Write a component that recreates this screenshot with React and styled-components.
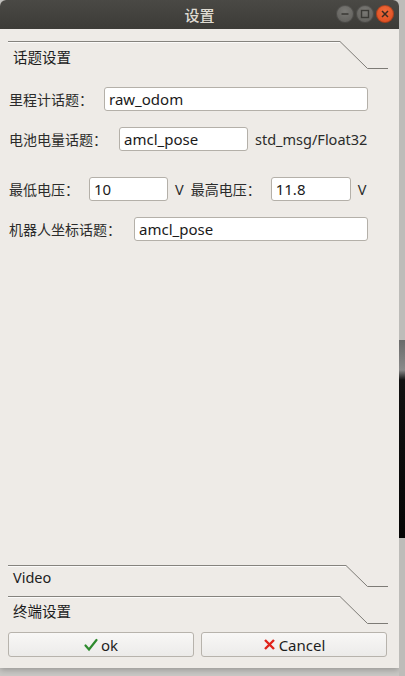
import styled, { createGlobalStyle } from 'styled-components';

const GlobalStyle = createGlobalStyle`
  html, body { margin: 0; padding: 0; }
  body {
    width: 405px;
    height: 676px;
    overflow: hidden;
    background: #c9c8c5;
    font-family: "Noto Sans", "Noto Sans CJK SC", sans-serif;
  }
`;

const Desktop = styled.div`
  display: flex;
  width: 405px;
  height: 676px;
`;

const Window = styled.div`
  width: 399px;
  height: 668px;
  display: flex;
  flex-direction: column;
  background: #eeebe7;
  border-radius: 6px 6px 0 0;
  overflow: hidden;
  box-shadow: 0 2px 6px rgba(0, 0, 0, 0.25);
  flex-shrink: 0;
`;

const Strip = styled.div`
  flex: 1;
  display: flex;
  flex-direction: column;
  background: #bdbcb9;
`;

const StripGap = styled.div`
  height: ${({ $h }) => $h}px;
`;

const StripDark = styled.div`
  height: 198px;
  background: linear-gradient(#6a6a6a 0, #8a8a8a 30px, #111 40px, #050505 100%);
`;

const TitleBar = styled.div`
  height: 29px;
  flex-shrink: 0;
  display: flex;
  align-items: center;
  justify-content: center;
  position: relative;
  background: linear-gradient(#4a4945, #3c3b37);
  color: #dfdbd2;
  font-family: "Noto Sans CJK SC", sans-serif;
  font-size: 15px;
  font-weight: 500;
`;

const WinButtons = styled.div`
  position: absolute;
  right: 5px;
  top: 5px;
  display: flex;
  gap: 2px;
`;

const WinButton = styled.div`
  width: 18px;
  height: 18px;
  border-radius: 50%;
  display: flex;
  align-items: center;
  justify-content: center;
  background: ${({ $close }) =>
    $close ? 'radial-gradient(circle at 50% 35%, #f06a3a, #d9481c)' : 'radial-gradient(circle at 50% 35%, #7a7975, #5b5a56)'};
  box-shadow: inset 0 0 0 1px rgba(0, 0, 0, 0.25);
`;

const Body = styled.div`
  flex: 1;
  display: flex;
  flex-direction: column;
  padding: 12px 11px 11px 8px;
`;

const Header = styled.div`
  display: flex;
  height: ${({ $h }) => $h}px;
  flex-shrink: 0;
`;

const HeaderLabel = styled.div`
  flex: 1;
  border-top: 1px solid #85837e;
  box-shadow: inset 0 1px 0 #fbfaf9;
  padding-left: 5px;
  padding-top: ${({ $pt }) => $pt}px;
  font-size: 14.5px;
  color: #1d1d1d;
  line-height: 18px;
`;

const Form = styled.div`
  display: flex;
  flex-direction: column;
  padding-right: 20px;
  padding-left: 1px;
`;

const Row = styled.div`
  display: flex;
  align-items: center;
  height: 24px;
  margin-top: ${({ $mt }) => $mt}px;
`;

const Label = styled.span`
  font-size: 14px;
  color: #2b2b2b;
  white-space: nowrap;
  margin-right: ${({ $mr }) => $mr ?? 0}px;
`;

const Unit = styled(Label)`
  font-size: 14.5px;
`;

const Input = styled.div`
  height: 24px;
  box-sizing: border-box;
  border: 1px solid #b4b0a9;
  border-radius: 3px;
  background: #fff;
  padding-left: 4px;
  display: flex;
  align-items: center;
  font-size: 15px;
  color: #1a1a1a;
  flex: ${({ $w }) => ($w ? `0 0 ${$w}px` : 1)};
  margin-right: ${({ $mr }) => $mr ?? 0}px;
`;

const Spacer = styled.div`
  flex: 1;
`;

const Buttons = styled.div`
  display: flex;
  gap: 7px;
  margin-top: 8px;
  height: 25px;
  padding-right: 1px;
`;

const Button = styled.div`
  flex: 1;
  display: flex;
  align-items: center;
  justify-content: center;
  gap: 3px;
  box-sizing: border-box;
  border: 1px solid #b7b3ac;
  border-radius: 3px;
  background: linear-gradient(#f8f7f6, #ecebe9);
  font-size: 15px;
  color: #1d1d1d;
`;

function Corner({ h }) {
  return (
    <svg width={h + 20} height={h} viewBox={`0 0 ${h + 20} ${h}`}>
      <polyline points={`0,0.5 ${h - 0.5},${h - 0.5} ${h + 20},${h - 0.5}`} fill="none" stroke="#7d7b76" strokeWidth="1" />
    </svg>
  );
}

function SectionHeader({ h, pt, children }) {
  return (
    <Header $h={h}>
      <HeaderLabel $pt={pt}>{children}</HeaderLabel>
      <Corner h={h} />
    </Header>
  );
}

export default function App() {
  return (
    <>
      <GlobalStyle />
      <Desktop>
        <Window>
          <TitleBar>
            设置
            <WinButtons>
              <WinButton>
                <svg width="10" height="10" viewBox="0 0 10 10">
                  <line x1="1.5" y1="5" x2="8.5" y2="5" stroke="#3a3935" strokeWidth="1.6" />
                </svg>
              </WinButton>
              <WinButton>
                <svg width="10" height="10" viewBox="0 0 10 10">
                  <rect x="1.5" y="1.5" width="7" height="7" fill="none" stroke="#3a3935" strokeWidth="1.4" />
                </svg>
              </WinButton>
              <WinButton $close>
                <svg width="10" height="10" viewBox="0 0 10 10">
                  <path d="M2 2L8 8M8 2L2 8" stroke="#3a2a22" strokeWidth="1.5" />
                </svg>
              </WinButton>
            </WinButtons>
          </TitleBar>
          <Body>
            <SectionHeader h={28} pt={6}>话题设置</SectionHeader>
            <Form>
              <Row $mt={18}>
                <Label $mr={11}>里程计话题：</Label>
                <Input>raw_odom</Input>
              </Row>
              <Row $mt={16}>
                <Label $mr={12}>电池电量话题：</Label>
                <Input $w={129} $mr={7}>amcl_pose</Input>
                <Unit>std_msg/Float32</Unit>
              </Row>
              <Row $mt={26}>
                <Label $mr={10}>最低电压：</Label>
                <Input $w={79} $mr={7}>10</Input>
                <Unit $mr={7}>V</Unit>
                <Label $mr={10}>最高电压：</Label>
                <Input $w={80} $mr={7}>11.8</Input>
                <Unit>V</Unit>
              </Row>
              <Row $mt={16}>
                <Label $mr={13}>机器人坐标话题：</Label>
                <Input>amcl_pose</Input>
              </Row>
            </Form>
            <Spacer />
            <SectionHeader h={22} pt={2}>Video</SectionHeader>
            <Header $h={9} />
            <SectionHeader h={28} pt={5}>终端设置</SectionHeader>
            <Buttons>
              <Button>
                <svg width="14" height="14" viewBox="0 0 14 14">
                  <path d="M1.5 7.5L5 11.5L12.5 2" fill="none" stroke="#2e8b2e" strokeWidth="2.2" strokeLinecap="round" />
                </svg>
                ok
              </Button>
              <Button>
                <svg width="13" height="13" viewBox="0 0 13 13">
                  <path d="M2 2L11 11M11 2L2 11" stroke="#e0241b" strokeWidth="2.4" />
                </svg>
                Cancel
              </Button>
            </Buttons>
          </Body>
        </Window>
        <Strip>
          <StripGap $h={340} />
          <StripDark />
          <StripGap $h={60} />
        </Strip>
      </Desktop>
    </>
  );
}
